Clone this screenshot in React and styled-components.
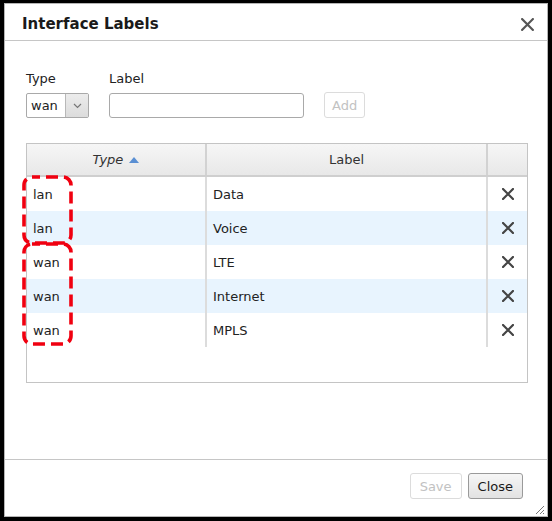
import React from "react";
import styled, { createGlobalStyle } from "styled-components";

const GlobalStyle = createGlobalStyle`
  html, body {
    margin: 0;
    padding: 0;
    background: #000;
  }
  * {
    box-sizing: border-box;
  }
`;

const Frame = styled.div`
  width: 552px;
  height: 521px;
  background: #000;
  padding: 3px 4px 4px 4px;
  font-family: Tahoma, "DejaVu Sans", "Noto Sans", sans-serif;
  font-size: 13px;
  color: #222;
`;

const Dialog = styled.div`
  position: relative;
  height: 100%;
  background: #fff;
  border: 1px solid #b5b5b5;
  display: flex;
  flex-direction: column;
`;

const Header = styled.div`
  height: 37px;
  flex: none;
  display: flex;
  align-items: center;
  justify-content: space-between;
  padding: 4px 13px 0 17px;
  border-bottom: 1px solid #c6c6c6;
`;

const Title = styled.h1`
  margin: 0;
  font-size: 15px;
  font-weight: bold;
  color: #1a1a1a;
`;

const Body = styled.div`
  flex: 1;
  padding: 30px 19px 0 21px;
`;

const FieldRow = styled.div`
  display: flex;
  align-items: flex-end;
  gap: 20px;
`;

const Field = styled.div`
  display: flex;
  flex-direction: column;
  gap: 6px;
`;

const FieldLabel = styled.label`
  line-height: 16px;
  color: #222;
`;

const Select = styled.div`
  display: flex;
  width: 63px;
  height: 25px;
  border: 1px solid #a9a9a9;
  border-radius: 2px;
  background: #fff;
`;

const SelectValue = styled.span`
  flex: 1;
  line-height: 23px;
  padding-left: 4px;
`;

const SelectArrow = styled.span`
  width: 23px;
  display: flex;
  align-items: center;
  justify-content: center;
  background: linear-gradient(#ececec, #dcdcdc);
  border-left: 1px solid #b8b8b8;
`;

const TextInput = styled.input`
  width: 195px;
  height: 25px;
  border: 1px solid #a9a9a9;
  border-radius: 3px;
  outline: none;
`;

const Button = styled.button`
  height: 26px;
  padding: 0 ${(p) => p.$pad || 8}px;
  font-family: inherit;
  font-size: 13px;
  border-radius: 3px;
  border: 1px solid ${(p) => (p.disabled ? "#dcdcdc" : "#9a9a9a")};
  background: ${(p) =>
    p.disabled ? "#fff" : "linear-gradient(#f6f6f6, #e2e2e2)"};
  color: ${(p) => (p.disabled ? "#c2c2c2" : "#1a1a1a")};
`;

const Grid = styled.div`
  position: relative;
  margin-top: 25px;
  height: 240px;
  border: 1px solid #c4c4c4;
  background: #fff;
`;

const GridRow = styled.div`
  display: grid;
  grid-template-columns: 180px 281px 1fr;
  height: ${(p) => (p.$head ? 33 : 34)}px;
  background: ${(p) =>
    p.$head
      ? "linear-gradient(#f6f6f6, #e8e8e8)"
      : p.$alt
      ? "#e8f4fe"
      : "#fff"};
  border-bottom: ${(p) => (p.$head ? "2px solid #cfcfcf" : "none")};
`;

const HeadCell = styled.div`
  display: flex;
  align-items: center;
  justify-content: center;
  gap: 6px;
  color: #333;
  font-style: ${(p) => (p.$italic ? "italic" : "normal")};
  border-right: ${(p) => (p.$last ? "none" : "2px solid #d2d2d2")};
`;

const Cell = styled.div`
  display: flex;
  align-items: center;
  justify-content: ${(p) => (p.$center ? "center" : "flex-start")};
  padding-left: ${(p) => (p.$center ? 0 : 6)}px;
  border-right: ${(p) => (p.$last ? "none" : "2px solid #dcdcdc")};
`;

const SortArrow = styled.span`
  width: 0;
  height: 0;
  border-left: 5px solid transparent;
  border-right: 5px solid transparent;
  border-bottom: 6px solid #5a8fd3;
`;

const Marker = styled.svg`
  position: absolute;
  left: -5px;
  top: ${(p) => p.$top}px;
  overflow: visible;
`;

const Footer = styled.div`
  height: 57px;
  flex: none;
  border-top: 1px solid #c6c6c6;
  display: flex;
  justify-content: flex-end;
  align-items: flex-start;
  gap: 6px;
  padding: 13px 24px 0 0;
`;

const Grip = styled.svg`
  position: absolute;
  right: 2px;
  bottom: 1px;
`;

const CloseIcon = ({ size = 12, color = "#444", width = 2.2 }) => (
  <svg width={size} height={size} viewBox="0 0 12 12">
    <path
      d="M1 1 L11 11 M11 1 L1 11"
      stroke={color}
      strokeWidth={width}
      strokeLinecap="square"
    />
  </svg>
);

const rows = [
  { type: "lan", label: "Data" },
  { type: "lan", label: "Voice" },
  { type: "wan", label: "LTE" },
  { type: "wan", label: "Internet" },
  { type: "wan", label: "MPLS" },
];

const DashedBox = ({ top, height }) => (
  <Marker $top={top} width="51" height={height}>
    <rect
      x="2"
      y="2"
      width="47"
      height={height - 4}
      rx="8"
      fill="none"
      stroke="#f00010"
      strokeWidth="3.6"
      strokeDasharray="12 6"
      strokeDashoffset="4"
    />
  </Marker>
);

export default function App() {
  return (
    <Frame>
      <GlobalStyle />
      <Dialog>
        <Header>
          <Title>Interface Labels</Title>
          <CloseIcon size={13} color="#555" width={2} />
        </Header>
        <Body>
          <FieldRow>
            <Field>
              <FieldLabel>Type</FieldLabel>
              <Select>
                <SelectValue>wan</SelectValue>
                <SelectArrow>
                  <svg width="9" height="6" viewBox="0 0 9 6">
                    <path
                      d="M1 1 L4.5 4.5 L8 1"
                      fill="none"
                      stroke="#777"
                      strokeWidth="1.2"
                    />
                  </svg>
                </SelectArrow>
              </Select>
            </Field>
            <Field>
              <FieldLabel>Label</FieldLabel>
              <TextInput />
            </Field>
            <Button disabled $pad={7}>
              Add
            </Button>
          </FieldRow>
          <Grid>
            <GridRow $head>
              <HeadCell $italic>
                Type <SortArrow />
              </HeadCell>
              <HeadCell>Label</HeadCell>
              <HeadCell $last />
            </GridRow>
            {rows.map((r, i) => (
              <GridRow key={i} $alt={i % 2 === 1}>
                <Cell>{r.type}</Cell>
                <Cell>{r.label}</Cell>
                <Cell $center $last>
                  <CloseIcon size={12} color="#444" width={2.2} />
                </Cell>
              </GridRow>
            ))}
            <DashedBox top={31} height={70} />
            <DashedBox top={98} height={104} />
          </Grid>
        </Body>
        <Footer>
          <Button disabled $pad={9}>
            Save
          </Button>
          <Button $pad={9}>Close</Button>
        </Footer>
        <Grip width="12" height="12" viewBox="0 0 12 12">
          <path
            d="M11 3 L3 11 M11 7 L7 11 M11 10 L10 11"
            stroke="#777"
            strokeWidth="1"
          />
        </Grip>
      </Dialog>
    </Frame>
  );
}
